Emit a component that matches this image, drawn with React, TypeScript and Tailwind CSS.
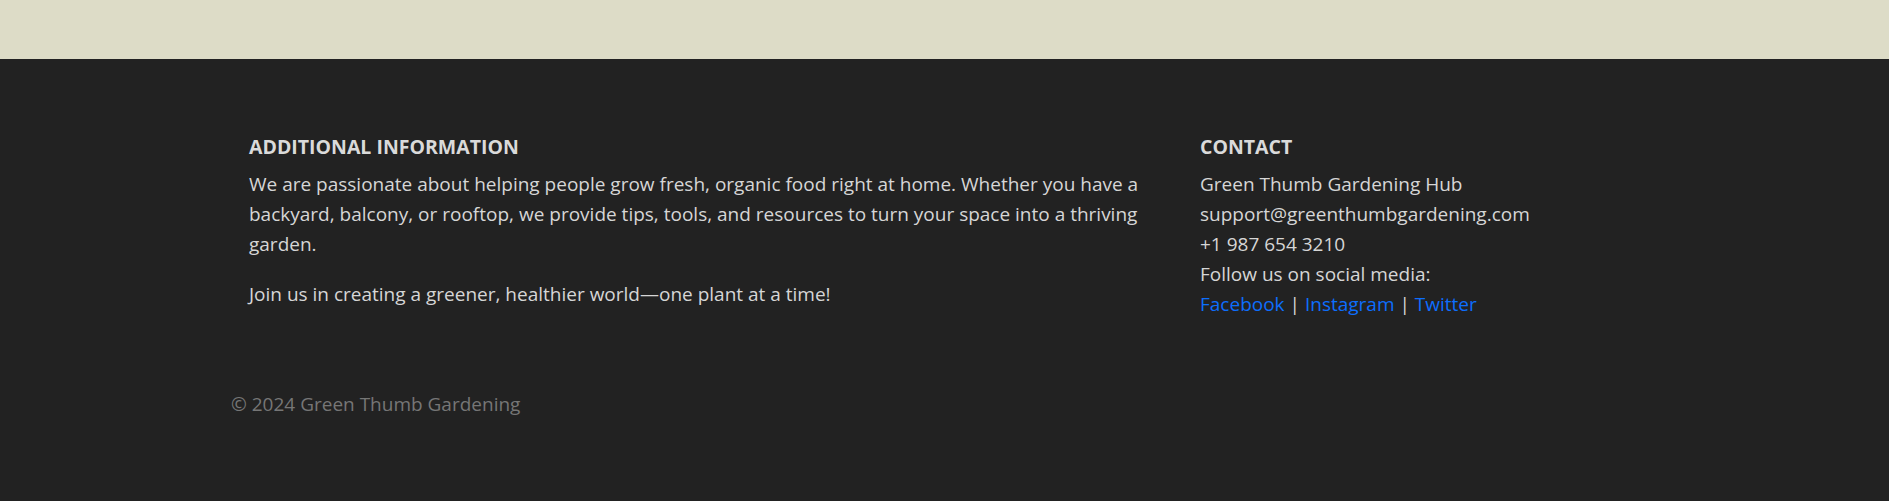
const App = () => {
  return (
    <div className="min-h-[501px] bg-[#222222] font-['Segoe_UI','Open_Sans',sans-serif] text-[19px] leading-[30px] text-[#d6d6d6]">
      <div className="h-[59px] bg-[#dddcc7]" />

      <footer className="pt-[76px] pb-[82px]">
        <div className="ml-[249px] grid grid-cols-[927px_1fr] gap-6">
          <section>
            <h3 className="text-[19.5px] font-bold uppercase leading-6 text-[#dadada]">Additional Information</h3>
            <p className="mt-[10px]">
              We are passionate about helping people grow fresh, organic food right at home. Whether you have a
              backyard, balcony, or rooftop, we provide tips, tools, and resources to turn your space into a thriving
              garden.
            </p>
            <p className="mt-5">Join us in creating a greener, healthier world—one plant at a time!</p>
          </section>

          <section>
            <h3 className="text-[19.5px] font-bold uppercase leading-6 text-[#dadada]">Contact</h3>
            <div className="mt-[10px]">
              <p>Green Thumb Gardening Hub</p>
              <p>support@greenthumbgardening.com</p>
              <p>+1 987 654 3210</p>
              <p>Follow us on social media:</p>
              <p>
                <a href="#" className="text-[#0d6efd]">Facebook</a> |{" "}
                <a href="#" className="text-[#0d6efd]">Instagram</a> |{" "}
                <a href="#" className="text-[#0d6efd]">Twitter</a>
              </p>
            </div>
          </section>
        </div>

        <p className="ml-[231px] mt-[70px] text-[#767676]">© 2024 Green Thumb Gardening</p>
      </footer>
    </div>
  );
};

export default App;
